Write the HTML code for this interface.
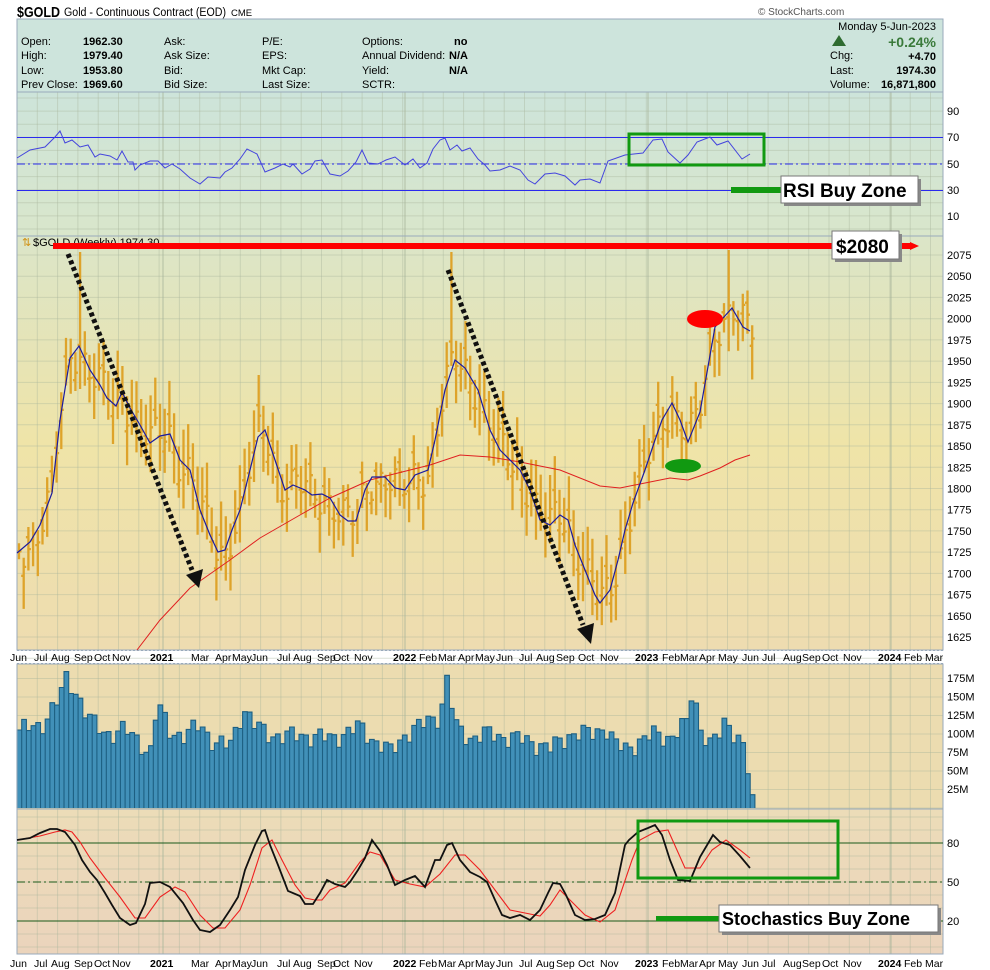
<!DOCTYPE html>
<html><head><meta charset="utf-8"><style>
html,body{margin:0;padding:0;background:#fff;width:990px;height:970px;overflow:hidden}
svg{position:absolute;left:0;top:0;font-family:"Liberation Sans",sans-serif}
</style></head><body>
<svg id="s" width="990" height="970" xmlns="http://www.w3.org/2000/svg">
<defs>
<linearGradient id="gr" x1="0" y1="0" x2="0" y2="1"><stop offset="0" stop-color="#cde4da"/><stop offset="1" stop-color="#d9e6cb"/></linearGradient>
<linearGradient id="gp" x1="0" y1="0" x2="0" y2="1"><stop offset="0" stop-color="#dbe5c8"/><stop offset="0.5" stop-color="#efe4a8"/><stop offset="1" stop-color="#eedcb0"/></linearGradient>
<linearGradient id="gs" x1="0" y1="0" x2="0" y2="1"><stop offset="0" stop-color="#ecdcb8"/><stop offset="1" stop-color="#ebd4bc"/></linearGradient>
</defs>
<text x="17" y="17" font-size="15" font-weight="bold" textLength="43" lengthAdjust="spacingAndGlyphs">$GOLD</text>
<text x="64" y="16" font-size="11.5" textLength="162" lengthAdjust="spacingAndGlyphs">Gold - Continuous Contract (EOD)</text>
<text x="231" y="16" font-size="9.5">CME</text>
<text x="758" y="15" font-size="10" fill="#555">© StockCharts.com</text>
<rect x="17" y="19" width="926" height="73" fill="#cde4dc" stroke="#9ab" stroke-width="1"/>
<g font-size="11">
<text x="21" y="45">Open:</text><text x="83" y="45" font-weight="bold">1962.30</text>
<text x="21" y="59">High:</text><text x="83" y="59" font-weight="bold">1979.40</text>
<text x="21" y="74">Low:</text><text x="83" y="74" font-weight="bold">1953.80</text>
<text x="21" y="88">Prev Close:</text><text x="83" y="88" font-weight="bold">1969.60</text>
<text x="164" y="45">Ask:</text><text x="164" y="59">Ask Size:</text><text x="164" y="74">Bid:</text><text x="164" y="88">Bid Size:</text>
<text x="262" y="45">P/E:</text><text x="262" y="59">EPS:</text><text x="262" y="74">Mkt Cap:</text><text x="262" y="88">Last Size:</text>
<text x="362" y="45">Options:</text><text x="454" y="45" font-weight="bold">no</text>
<text x="362" y="59">Annual Dividend:</text><text x="449" y="59" font-weight="bold">N/A</text>
<text x="362" y="74">Yield:</text><text x="449" y="74" font-weight="bold">N/A</text>
<text x="362" y="88">SCTR:</text>
<text x="936" y="30" text-anchor="end">Monday  5-Jun-2023</text>
<polygon points="832,46 846,46 839,35" fill="#2e6b30"/>
<text x="936" y="47" text-anchor="end" font-size="14" font-weight="bold" fill="#3a7a3a">+0.24%</text>
<text x="830" y="59">Chg:</text><text x="936" y="60" text-anchor="end" font-weight="bold">+4.70</text>
<text x="830" y="74">Last:</text><text x="936" y="74" text-anchor="end" font-weight="bold">1974.30</text>
<text x="830" y="88">Volume:</text><text x="936" y="88" text-anchor="end" font-weight="bold">16,871,800</text>
</g>
<rect x="17" y="92" width="926" height="144" fill="url(#gr)"/>
<rect x="17" y="236" width="926" height="414" fill="url(#gp)"/>
<rect x="17" y="650" width="926" height="14" fill="#fff"/>
<rect x="17" y="664" width="926" height="145" fill="#ecdcb0"/>
<rect x="17" y="809" width="926" height="145" fill="url(#gs)"/>
<g id="grid" stroke="#a8b49a" stroke-opacity="0.4" stroke-width="1"></g>
<g id="bars"></g>
<g id="vol"></g>
<g fill="none" stroke="#9ab" stroke-width="1">
<rect x="17" y="92" width="926" height="144"/><rect x="17" y="236" width="926" height="414"/>
<rect x="17" y="664" width="926" height="145"/><rect x="17" y="809" width="926" height="145"/>
</g>
<line x1="17" y1="650.5" x2="943" y2="650.5" stroke="#9ab" stroke-dasharray="2,2"/>
<line x1="17" y1="663.5" x2="943" y2="663.5" stroke="#9ab" stroke-dasharray="2,2"/>
<line x1="17" y1="137.5" x2="943" y2="137.5" stroke="#2a2aee"/>
<line x1="17" y1="190.5" x2="943" y2="190.5" stroke="#2a2aee"/>
<line x1="17" y1="164" x2="943" y2="164" stroke="#2a2aee" stroke-dasharray="8,3,2,3"/>
<polyline id="rsi" fill="none" stroke="#4444dd" stroke-width="1"/>
<g id="axes" font-size="11"></g>
<polyline id="red" fill="none" stroke="#e02020" stroke-width="1" points="137,650 160,620 190,588 230,560 260,538 300,515 330,498 370,480 410,470 430,465 460,455 490,457 520,462 560,470 600,486 620,488 640,484 670,478 688,480 700,476 720,468 735,460 750,455"/>
<polyline id="blue" fill="none" stroke="#1a1aa0" stroke-width="1.2"/>
<text x="22" y="246" font-size="11" fill="#d09010">⇅</text>
<text x="33" y="246" font-size="11">$GOLD (Weekly) 1974.30</text>
<line x1="17" y1="843" x2="943" y2="843" stroke="#1a5a1a"/>
<line x1="17" y1="921" x2="943" y2="921" stroke="#1a5a1a"/>
<line x1="17" y1="882" x2="943" y2="882" stroke="#1a5a1a" stroke-dasharray="8,3,2,3"/>
<polyline fill="none" stroke="#ee2020" stroke-width="1.1" points="17,840 40,836 55,832 65,830 72,832 80,842 90,858 105,878 120,897 135,918 145,918 160,897 175,887 185,892 200,915 213,928 225,928 240,910 250,885 262,848 272,840 282,860 295,885 305,898 315,900 322,900 330,890 345,883 360,862 370,852 380,855 395,880 410,884 425,887 440,874 455,855 465,855 480,870 495,890 510,910 525,913 540,916 550,905 560,890 570,900 585,915 600,922 615,910 632,860 640,840 655,832 668,830 685,868 700,868 712,850 726,840 740,850 750,858"/>
<polyline fill="none" stroke="#111" stroke-width="1.8" points="17,840 30,838 40,833 50,829 57,829 65,832 75,845 82,860 90,872 97,880 105,893 112,905 120,918 130,925 136,923 145,904 150,883 160,882 170,887 183,903 193,920 200,930 210,932 220,925 230,910 238,897 245,870 255,845 262,831 265,830 270,845 278,865 288,891 300,896 305,904 313,904 320,893 327,880 335,884 345,887 350,882 358,870 365,858 372,840 380,851 387,865 395,885 405,880 415,876 425,887 435,860 440,860 447,845 452,843 460,860 470,872 480,877 487,882 495,900 502,915 510,918 520,915 530,920 540,910 548,893 553,883 560,884 566,895 575,915 585,920 595,919 605,915 615,893 625,845 629,840 638,832 648,828 655,825 662,835 670,860 678,880 690,881 700,857 713,835 720,842 730,845 740,856 750,868"/>
<rect x="629" y="134" width="135" height="31" fill="none" stroke="#119911" stroke-width="3"/>
<rect x="731" y="187" width="52" height="6" fill="#119911"/>
<rect x="784" y="179" width="137" height="27" fill="#888"/>
<rect x="781" y="176" width="137" height="27" fill="#fff" stroke="#777"/>
<text x="783" y="197" font-size="19" font-weight="bold">RSI Buy Zone</text>
<line x1="53" y1="246" x2="912" y2="246" stroke="#ff0000" stroke-width="6"/>
<polygon points="910,242 919,246 910,250" fill="#ff0000"/>
<rect x="835" y="234" width="67" height="28" fill="#888"/>
<rect x="832" y="231" width="67" height="28" fill="#fff" stroke="#777"/>
<text x="836" y="253" font-size="19" font-weight="bold">$2080</text>
<ellipse cx="705" cy="319" rx="18" ry="9" fill="#ff0000"/>
<ellipse cx="683" cy="466" rx="18" ry="7" fill="#119911"/>
<line x1="68" y1="254" x2="192" y2="570" stroke="#111" stroke-width="5" stroke-dasharray="4,3"/>
<polygon points="186,575 203,569 199,588" fill="#111"/>
<line x1="448" y1="270" x2="583" y2="625" stroke="#111" stroke-width="5" stroke-dasharray="4,3"/>
<polygon points="577,629 594,623 591,644" fill="#111"/>
<rect x="638" y="821" width="200" height="57" fill="none" stroke="#119911" stroke-width="3"/>
<rect x="656" y="916" width="64" height="5" fill="#119911"/>
<rect x="722" y="908" width="219" height="27" fill="#888"/>
<rect x="719" y="905" width="219" height="27" fill="#fff" stroke="#777"/>
<text x="722" y="925" font-size="18" font-weight="bold">Stochastics Buy Zone</text>
</svg>
<script>
(function(){
var NS="http://www.w3.org/2000/svg";
function el(p,t,a,txt){var e=document.createElementNS(NS,t);for(var k in a)e.setAttribute(k,a[k]);if(txt!=null)e.textContent=txt;p.appendChild(e);return e;}
var rsi=[[17,158],[30,150],[45,147],[55,137],[60,131],[65,143],[72,140],[80,147],[88,145],[95,157],[100,154],[110,156],[117,160],[122,151],[128,162],[133,162],[135,170],[140,165],[150,161],[158,161],[165,168],[172,164],[180,169],[190,178],[200,184],[208,177],[220,178],[225,172],[232,168],[240,159],[247,149],[257,154],[265,172],[275,168],[283,164],[290,167],[293,164],[302,174],[310,169],[315,161],[322,160],[330,174],[340,176],[348,171],[356,162],[362,150],[368,163],[378,164],[386,160],[395,157],[405,165],[413,159],[420,168],[427,163],[433,149],[440,140],[445,138],[450,150],[457,145],[462,151],[470,148],[478,159],[485,165],[490,171],[500,170],[510,166],[520,170],[528,180],[535,184],[545,174],[555,173],[565,176],[575,185],[580,180],[590,179],[600,183],[608,161],[625,155],[643,153],[653,140],[662,139],[668,152],[680,163],[688,155],[697,142],[710,137],[717,145],[728,141],[742,159],[750,154]];
document.getElementById('rsi').setAttribute('points',rsi.map(function(p){return p.join(',')}).join(' '));
var blue=[[17,553],[30,542],[40,525],[52,493],[60,420],[70,358],[79,346],[90,370],[100,385],[107,398],[116,406],[122,392],[130,408],[140,425],[150,443],[160,436],[170,434],[180,460],[190,470],[200,510],[210,535],[218,552],[225,550],[232,530],[240,510],[250,470],[258,437],[265,430],[275,460],[285,490],[293,485],[305,490],[312,495],[322,494],[330,498],[340,515],[348,521],[356,521],[365,490],[372,477],[385,477],[395,488],[405,490],[415,475],[428,470],[435,440],[445,390],[455,360],[465,368],[478,390],[490,430],[500,450],[510,460],[520,470],[530,490],[540,520],[550,525],[560,515],[568,520],[575,545],[585,570],[595,595],[600,603],[610,590],[618,560],[625,530],[633,503],[645,470],[655,440],[662,420],[672,403],[680,420],[688,442],[700,412],[715,327],[732,308],[743,327],[750,331]];
document.getElementById('blue').setAttribute('points',blue.map(function(p){return p.join(',')}).join(' '));
function interp(a,x){for(var i=1;i<a.length;i++){if(x<=a[i][0]){var t=(x-a[i-1][0])/(a[i][0]-a[i-1][0]);return a[i-1][1]+t*(a[i][1]-a[i-1][1]);}}return a[a.length-1][1];}
var g=document.getElementById('grid');
for(var x=17;x<943;x+=20.3){el(g,'line',{x1:x.toFixed(1),y1:92,x2:x.toFixed(1),y2:650});el(g,'line',{x1:x.toFixed(1),y1:664,x2:x.toFixed(1),y2:954});}
[163,405,648,891].forEach(function(x){el(g,'line',{x1:x,y1:92,x2:x,y2:650,'stroke-opacity':0.8});el(g,'line',{x1:x,y1:664,x2:x,y2:954,'stroke-opacity':0.8});});
for(var y=98;y<236;y+=13.1)el(g,'line',{x1:17,y1:y.toFixed(1),x2:943,y2:y.toFixed(1)});
for(var p=2075;p>=1600;p-=25){var yy=255+(2075-p)*0.849;el(g,'line',{x1:17,y1:yy.toFixed(1),x2:943,y2:yy.toFixed(1)});}
for(var v=0;v<=175;v+=25){var yv=808-v*0.74;el(g,'line',{x1:17,y1:yv.toFixed(1),x2:943,y2:yv.toFixed(1)});}
for(var s=0;s<=100;s+=10){var ys=947-s*1.3;el(g,'line',{x1:17,y1:ys.toFixed(1),x2:943,y2:ys.toFixed(1)});}
var b=document.getElementById('bars');var d='';
for(var i=0;i<157;i++){var x=19+i*4.7;var c=interp(blue,x)+Math.sin(i*1.7)*14+Math.sin(i*0.6)*10;var o=c+Math.sin(i*2.3)*12;
var hi=Math.min(o,c)-(8+Math.abs(Math.sin(i*3.1))*26),lo=Math.max(o,c)+(8+Math.abs(Math.sin(i*1.3))*26);
if(i==13)hi=252;if(i==92)hi=252;if(i==151)hi=250;
d+='M'+x.toFixed(1)+' '+hi.toFixed(1)+'V'+lo.toFixed(1)+'M'+(x-2.5).toFixed(1)+' '+o.toFixed(1)+'h2.5M'+x.toFixed(1)+' '+c.toFixed(1)+'h2.5';}
el(b,'path',{d:d,stroke:'#dea32a','stroke-width':2.3,fill:'none'});
var vk=[[17,105],[40,110],[50,130],[60,150],[65,175],[75,160],[85,130],[95,110],[110,100],[125,105],[140,90],[150,70],[157,140],[170,105],[185,95],[200,115],[215,85],[230,85],[243,135],[255,110],[270,100],[285,95],[300,100],[315,95],[330,95],[345,100],[360,110],[375,90],[390,75],[405,100],[420,110],[430,120],[440,125],[447,175],[455,110],[470,95],[490,100],[510,95],[530,90],[550,80],[570,100],[590,100],[605,110],[615,85],[625,80],[640,90],[655,100],[670,95],[688,115],[692,165],[700,110],[710,85],[720,100],[726,120],[735,100],[745,80],[750,20]];
var vg=document.getElementById('vol');var vd='';
for(var i=0;i<157;i++){var x=17+i*4.7;var h=interp(vk,x+2)+Math.sin(i*2.1)*10+Math.sin(i*0.9)*6;if(i==156)h=18;if(h<10)h=10;var ty=808-h*0.74;
vd+='M'+x.toFixed(1)+' 808V'+ty.toFixed(1)+'h4.7V808';}
el(vg,'path',{d:vd,fill:'#4190b8',stroke:'#1d5f82','stroke-width':1.1});
var ax=document.getElementById('axes');
[[90,115],[70,141],[50,168],[30,194],[10,220]].forEach(function(a){el(ax,'text',{x:947,y:a[1]},a[0]);});
for(var p=2075;p>=1625;p-=25){el(ax,'text',{x:947,y:(259+(2075-p)*0.849).toFixed(1)},p);}
['175M','150M','125M','100M','75M','50M','25M'].forEach(function(t,k){el(ax,'text',{x:947,y:(682+k*18.5).toFixed(1)},t);});
[[80,847],[50,886],[20,925]].forEach(function(a){el(ax,'text',{x:947,y:a[1]},a[0]);});
var months=[['Jun',10],['Jul',34],['Aug',51],['Sep',74],['Oct',94],['Nov',112],['2021',150,1],['Mar',191],['Apr',215],['May',232],['Jun',251],['Jul',277],['Aug',293],['Sep',317],['Oct',333],['Nov',354],['2022',393,1],['Feb',419],['Mar',438],['Apr',458],['May',475],['Jun',496],['Jul',519],['Aug',536],['Sep',556],['Oct',578],['Nov',600],['2023',635,1],['Feb',662],['Mar',680],['Apr',699],['May',718],['Jun',742],['Jul',762],['Aug',783],['Sep',802],['Oct',822],['Nov',843],['2024',878,1],['Feb',904],['Mar',925]];
[661,967].forEach(function(yy){months.forEach(function(m){var a={x:m[1],y:yy,'font-size':10.5};if(m[2])a['font-weight']='bold';el(ax,'text',a,m[0]);});});
})();
</script>
</body></html>
